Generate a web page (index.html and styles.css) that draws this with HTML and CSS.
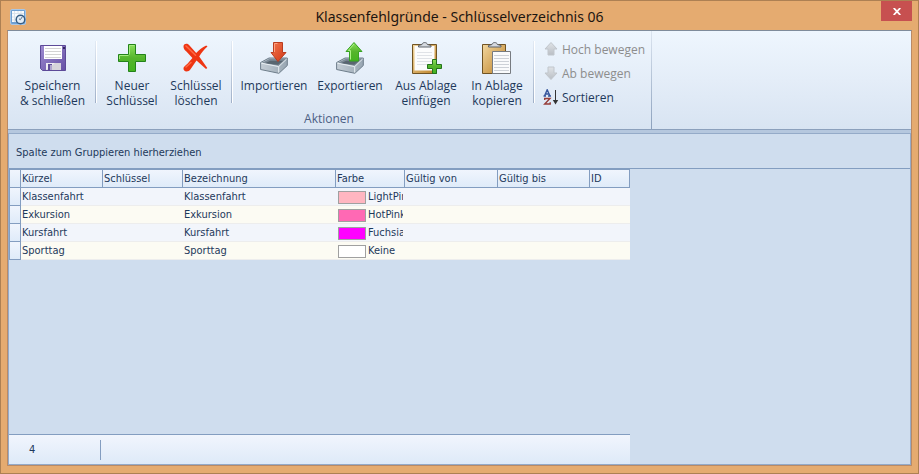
FILE: index.html
```html
<!DOCTYPE html>
<html lang="de">
<head>
<meta charset="utf-8">
<meta name="viewport" content="width=device-width, initial-scale=1">
<title>Klassenfehlgründe - Schlüsselverzeichnis 06</title>
<link rel="stylesheet" href="styles.css">
</head>
<body>
<svg class="defs" width="0" height="0" aria-hidden="true">
  <defs>
    <linearGradient id="green" x1="0" y1="0" x2="0" y2="1"><stop offset="0" stop-color="#8be05a"/><stop offset=".5" stop-color="#55b52c"/><stop offset="1" stop-color="#43b41f"/></linearGradient>
    <linearGradient id="red" x1="0" y1="0" x2="1" y2="1"><stop offset="0" stop-color="#f4774e"/><stop offset="1" stop-color="#cf3616"/></linearGradient>
    <linearGradient id="purple" x1="0" y1="0" x2="1" y2="1"><stop offset="0" stop-color="#9d8bd0"/><stop offset="1" stop-color="#6650a5"/></linearGradient>
    <linearGradient id="tray" x1="0" y1="0" x2="1" y2="0"><stop offset="0" stop-color="#c5ced6"/><stop offset="1" stop-color="#98a6b2"/></linearGradient>
    <linearGradient id="board" x1="0" y1="0" x2="1" y2="1"><stop offset="0" stop-color="#f2d79f"/><stop offset="1" stop-color="#bd8127"/></linearGradient>
    <linearGradient id="gray" x1="0" y1="0" x2="0" y2="1"><stop offset="0" stop-color="#e0e3e7"/><stop offset="1" stop-color="#b9bec4"/></linearGradient>
    <symbol id="plus" viewBox="0 0 28 28"><path d="M10.500 .5h7v10h10v7h-10v10h-7v-10H.5v-7h10z" fill="url(#green)" stroke="#23831a"/><path d="M11.500 10.500v-9h5M1.500 15v-3.500h9" fill="none" stroke="#a4eb7c"/></symbol>
    <symbol id="plus-small" viewBox="0 0 15 15"><path d="M5.500 .5h4v5h5v4h-5v5h-4v-5h-5v-4h5z" fill="url(#green)" stroke="#23731a"/></symbol>
    <symbol id="tray-shape" viewBox="0 0 28 32"><path d="M.6 20.500 9 16h18.300v7.500l-8.400 7.800L.6 27.500z" fill="url(#tray)" stroke="#6e7d8a"/><path d="M2 20.700 9.400 17h16.700l-7.600 6.700z" fill="#7d8b97"/><path d="m5 21.300 5.300-2.600h12.900L18 22.800z" fill="#596670"/><path d="m1.300 21.200 17.400 3.400L26.600 17M18.700 24.600v6" fill="none" stroke="#e9eff3"/></symbol>
  </defs>
</svg>
<div class="window">
  <header class="titlebar">
    <svg class="app-icon" viewBox="0 0 16 16" aria-hidden="true"><rect x=".5" y=".5" width="15" height="15" rx="1.500" fill="#6fa0d2" stroke="#a9c6e5"/><path d="M2 2h12v11H2z" fill="#fafcfe"/><path d="M2 4.500h12M4.500 2v11M8 2v3M11 2v3M2 8h5M2 11h4" stroke="#dce4ec"/><circle cx="10.500" cy="10.500" r="4.300" fill="#e2edf8" stroke="#365d83" stroke-width="1.500"/><path d="m12.500 7.500-2.200 3.200-1.300-.9" fill="none" stroke="#5a7088"/></svg>
    <h1 class="title">Klassenfehlgründe - Schlüsselverzeichnis 06</h1>
    <button class="close" type="button" aria-label="Schließen"><svg viewBox="0 0 8 7" aria-hidden="true"><path d="m.7 0 6.600 7M7.300 0 .7 7" stroke="#fff" stroke-width="1.800"/></svg></button>
  </header>
  <main class="client">
    <section class="ribbon" aria-label="Aktionen">
      <div class="group">
        <div class="tools">
          <button class="tool tool-large" type="button">
            <svg viewBox="0 0 32 32" aria-hidden="true"><path d="M3.500 3.500h25v25h-23l-2-2z" fill="url(#purple)" stroke="#5d4a98"/><path d="M7 4h18v13H7z" fill="#fff"/><path d="M8 6.500h16M8 9.500h16M8 12.500h16M8 15.500h16" stroke="#d3d3d3"/><path d="M26 5h2v2h-2z" fill="#352763"/><path d="M9 21h15v7H9z" fill="#d7d4db"/><path d="M9 28V21h9z" fill="#efedf2"/><path d="M11 22h4v6h-4z" fill="#5f4c98"/><path d="M13 23h2v5h-2z" fill="#b0a5cf"/></svg>
            <span>Speichern<br>&amp; schließen</span>
          </button>
          <i class="divider"></i>
          <button class="tool tool-narrow" type="button">
            <svg viewBox="0 0 32 32" aria-hidden="true"><use href="#plus" x="2" y="2" width="28" height="28"/></svg>
            <span>Neuer<br>Schlüssel</span>
          </button>
          <button class="tool tool-narrow" type="button">
            <svg viewBox="0 0 32 32" aria-hidden="true"><path d="M3.500 5c-.4-3.400 4-4.300 6-1.600L16.200 11c3-3.300 6-5.600 10-7.500l1.300 1C24 7.500 21.500 10.500 19.200 14.500L27.300 26l-1.300.9-9.500-8.300-6 8.700c-2 3.300-7.500 3-7-1.200.2-1.600 2.300-2.900 4.200-4.700l4.700-5.300-6-6.500C4.700 8 3.700 7 3.500 5z" fill="#ee3513"/><path d="m6 4 9.500 9.300M6 25l5-4.500" fill="none" stroke="#ff6a45" stroke-width="1.500" stroke-linecap="round"/></svg>
            <span>Schlüssel<br>löschen</span>
          </button>
          <i class="divider"></i>
          <button class="tool" type="button">
            <svg viewBox="0 0 32 32" aria-hidden="true"><use href="#tray-shape" x="2" y="0" width="28" height="32"/><path d="M15.500.5h9v10h3.500L20 19.500l-7-9h2.500z" fill="url(#red)" stroke="#b93c20"/><path d="M16.500 10V1.500h3" fill="none" stroke="#ffa181"/></svg>
            <span>Importieren</span>
          </button>
          <button class="tool" type="button">
            <svg viewBox="0 0 32 32" aria-hidden="true"><use href="#tray-shape" x="2" y="0" width="28" height="32"/><path d="m20 .5 8 9h-3.500v9.500h-9V9.500H12z" fill="url(#green)" stroke="#38a323"/><path d="m20 2-5.700 6.500h2.200v9" fill="none" stroke="#adf386"/></svg>
            <span>Exportieren</span>
          </button>
          <button class="tool" type="button">
            <svg viewBox="0 0 32 32" aria-hidden="true"><path d="M2.500 2.500h24v29h-24z" fill="url(#board)" stroke="#705323"/><path d="M4.500 4h20v24.500h-20z" fill="#fcfcfd"/><path d="M7 10.500h15M7 13.500h15M7 16.500h15M7 19.500h15M7 22.500h13" stroke="#e0e2e7"/><path d="M8.500 5V3.500l3.500-1c.3-2.600 5-2.600 5.400 0l3.600 1V5z" fill="#d6dae0" stroke="#5d626a"/><use href="#plus-small" x="17" y="17" width="15" height="15"/></svg>
            <span>Aus Ablage<br>einfügen</span>
          </button>
          <button class="tool tool-short" type="button">
            <svg viewBox="0 0 32 32" aria-hidden="true"><path d="M1.500 2.500h23v29h-23z" fill="url(#board)" stroke="#705323"/><path d="M7.500 5V3.500l3.500-1c.3-2.600 5-2.600 5.400 0l3.600 1V5z" fill="#d6dae0" stroke="#5d626a"/><path d="M11.500 9.500h18v22h-18z" fill="#fafbfc" stroke="#777b80"/><path d="M13 13.500h15M13 16.500h15M13 19.500h15M13 22.500h15M13 25.500h15M13 28.500h15" stroke="#cdd1d7"/></svg>
            <span>In Ablage<br>kopieren</span>
          </button>
          <i class="divider"></i>
          <div class="stack">
            <button class="mini" type="button" disabled><svg viewBox="0 0 16 16" aria-hidden="true"><path d="m8 1.500 6 6.500h-3v6H5V8H2z" fill="url(#gray)" stroke="#c1c6cc"/></svg>Hoch bewegen</button>
            <button class="mini" type="button" disabled><svg viewBox="0 0 16 16" aria-hidden="true"><path d="M8 14.500 2 8h3V2h6v6h3z" fill="url(#gray)" stroke="#c1c6cc"/></svg>Ab bewegen</button>
            <button class="mini" type="button"><svg viewBox="0 0 16 16" aria-hidden="true"><path d="M.5 7h2.500M5 7h3M1.500 7 4.200.8 7 7M2.500 5h3" fill="none" stroke="#36559c" stroke-width="1.400"/><path d="M1.700 11V9.500H7L1.700 15H7.200v-1.700" fill="none" stroke="#963d39" stroke-width="1.400"/><path d="M12.500 1v11" stroke="#333"/><path d="M9.800 11h5.400l-2.700 4.500z" fill="#333"/></svg>Sortieren</button>
          </div>
        </div>
        <div class="caption">Aktionen</div>
      </div>
    </section>
    <section class="grid-panel">
      <div class="group-box">Spalte zum Gruppieren hierherziehen</div>
      <table class="grid">
        <colgroup><col class="c-mark"><col class="c-short"><col class="c-key"><col class="c-name"><col class="c-color"><col class="c-from"><col class="c-to"><col class="c-id"></colgroup>
        <thead><tr><th></th><th>Kürzel</th><th>Schlüssel</th><th>Bezeichnung</th><th>Farbe</th><th>Gültig von</th><th>Gültig bis</th><th>ID</th></tr></thead>
        <tbody>
          <tr><th></th><td>Klassenfahrt</td><td></td><td>Klassenfahrt</td><td><div class="color"><i class="swatch light-pink"></i>LightPink</div></td><td></td><td></td><td></td></tr>
          <tr><th></th><td>Exkursion</td><td></td><td>Exkursion</td><td><div class="color"><i class="swatch hot-pink"></i>HotPink</div></td><td></td><td></td><td></td></tr>
          <tr><th></th><td>Kursfahrt</td><td></td><td>Kursfahrt</td><td><div class="color"><i class="swatch fuchsia"></i>Fuchsia</div></td><td></td><td></td><td></td></tr>
          <tr><th></th><td>Sporttag</td><td></td><td>Sporttag</td><td><div class="color"><i class="swatch"></i>Keine</div></td><td></td><td></td><td></td></tr>
        </tbody>
      </table>
      <footer class="summary"><span class="count">4</span></footer>
    </section>
  </main>
</div>
</body>
</html>
```

FILE: styles.css
```css
* { box-sizing: border-box; }

body {
  margin: 0;
  color: #1e395b;
  font: 11px/14px "DejaVu Sans Condensed", "DejaVu Sans", sans-serif;
}

button {
  margin: 0;
  padding: 0;
  border: 0;
  background: none;
  color: inherit;
  font: inherit;
}

svg { display: block; flex: none; }
.defs { position: absolute; }

.window {
  display: flex;
  flex-direction: column;
  min-height: 100vh;
  padding: 0 6px 7px;
  border: 1px solid #ad8053;
  background: #e5ab70;
}

/* Title bar */
.titlebar {
  display: grid;
  grid-template-columns: 46px 1fr 46px;
  height: 29px;
}

.app-icon { width: 16px; height: 16px; margin: 8px 0 0 3px; }

.title {
  margin: 0;
  color: #1c1510;
  font: 14px/32px "Noto Sans", sans-serif;
  text-align: center;
}

.close {
  display: grid;
  place-items: center;
  width: 31px;
  height: 20px;
  justify-self: end;
  background: #c75050;
}

.close svg { width: 8px; height: 7px; }

.client {
  display: flex;
  flex: 1;
  flex-direction: column;
  border: 1px solid #b98a66;
  border-top-color: #7f8c9b;
  background: #b5c7de;
}

/* Ribbon */
.ribbon {
  display: flex;
  height: 99px;
  border-bottom: 1px solid #8ba0bc;
  background: linear-gradient(#eef6fe, #e4edf8 50%, #d8e4f2);
  font: 12px/15px "Open Sans", sans-serif;
}

.group {
  display: flex;
  flex-direction: column;
  padding: 0 6px 0 5px;
  border-right: 1px solid;
  border-image: linear-gradient(#dce5f0, #8ba0bc) 1;
}

.tools { display: flex; }

.tool {
  display: flex;
  flex-direction: column;
  align-items: center;
  width: 76px;
  padding-top: 11px;
  white-space: nowrap;
}

.tool svg { width: 32px; height: 32px; margin-bottom: 4px; }
.tool-large { width: 79px; }
.tool-narrow { width: 64px; }
.tool-short { width: 66px; }

.divider {
  width: 2px;
  height: 62px;
  margin: 10px 3px 0;
  border-right: 1px solid #fff;
  background: linear-gradient(#e2eaf4, #a0b0c8);
}

.stack { padding: 6px 0 0 5px; }

.mini {
  display: flex;
  align-items: center;
  gap: 3px;
  height: 24px;
  white-space: nowrap;
}

.mini svg { width: 16px; height: 16px; }
.mini:disabled { color: #8d8d8d; }

.caption {
  margin-top: auto;
  padding-bottom: 3px;
  color: #4c6084;
  text-align: center;
}

/* Grid */
.grid-panel {
  display: flex;
  flex: 1;
  flex-direction: column;
  align-items: flex-start;
  margin-top: 3px;
  border: 1px solid #94aac8;
  background: #cfddee;
}

.group-box {
  align-self: stretch;
  height: 35px;
  padding: 12px 7px 0;
  border-bottom: 1px solid #839dc0;
}

.grid {
  width: 621px;
  border-collapse: separate;
  border-spacing: 0;
  table-layout: fixed;
}

.c-mark { width: 12px; }
.c-short { width: 82px; }
.c-key { width: 80px; }
.c-name { width: 153px; }
.c-color { width: 69px; }
.c-from { width: 93px; }
.c-to { width: 92px; }
.c-id { width: 40px; }

.grid th,
.grid td {
  height: 18px;
  padding: 1px 1px 0;
  overflow: hidden;
  font-weight: normal;
  text-align: left;
  white-space: nowrap;
}

.grid th {
  border-right: 1px solid #839dc0;
  border-bottom: 1px solid #839dc0;
  background: linear-gradient(#f0f5fd, #dfebf9);
}

.grid th:first-child { border-left: 1px solid #839dc0; }
.grid thead th { height: 19px; border-top: 1px solid #839dc0; }
.grid td { border-bottom: 1px solid #ededed; background: #f2f5fb; }
.grid td:nth-child(5) { padding-left: 2px; }
.grid tbody tr:nth-child(even) td { background: #fcfbf3; }

.grid .color {
  display: flex;
  align-items: center;
  gap: 2px;
  margin-right: 1px;
  overflow: hidden;
}

.swatch {
  flex: none;
  width: 28px;
  height: 13px;
  border: 1px solid #a0a0a0;
  background: #fff;
}

.light-pink { background: lightpink; }
.hot-pink { background: hotpink; }
.fuchsia { background: fuchsia; }

.summary {
  width: 621px;
  height: 30px;
  margin-top: auto;
  padding-top: 5px;
  border-top: 1px solid #839dc0;
  background: linear-gradient(#f1f5fd, #deeaf8);
}

.count {
  display: block;
  width: 92px;
  padding-left: 20px;
  border-right: 1px solid #839dc0;
  line-height: 20px;
}
```
